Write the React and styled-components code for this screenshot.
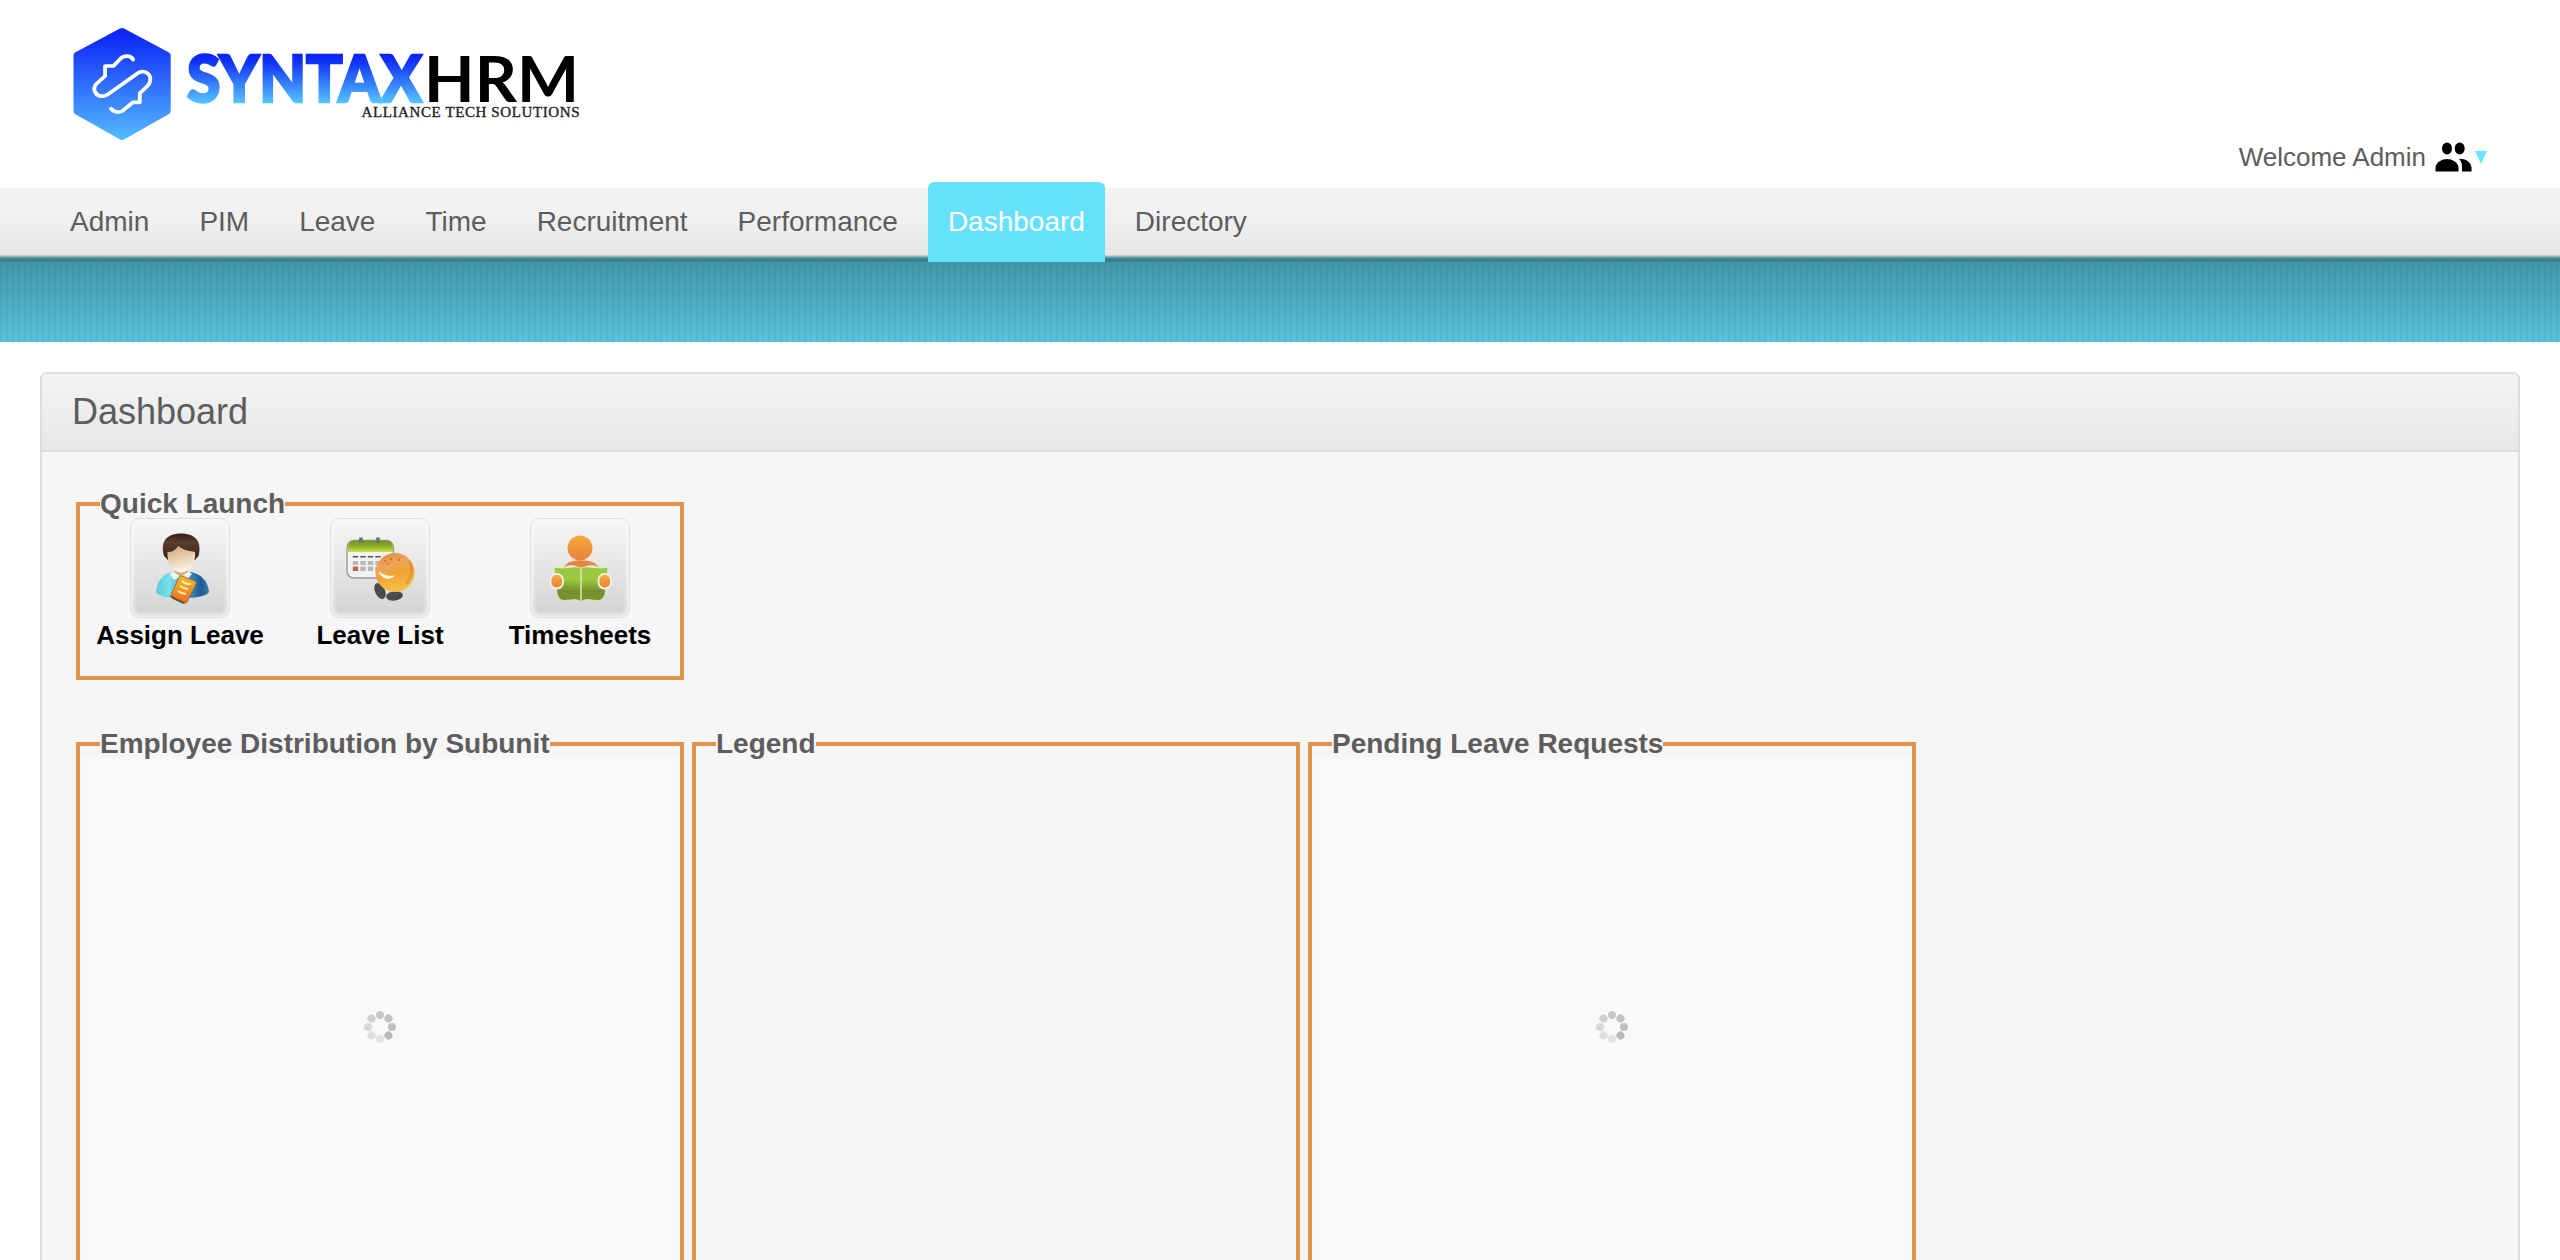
import React from 'react';
import styled, { createGlobalStyle } from 'styled-components';

const GlobalStyle = createGlobalStyle`
  * { box-sizing: border-box; }
  html, body { margin: 0; padding: 0; background: #fff; }
  body { font-family: "Liberation Sans", Arial, sans-serif; color: #5d5d5d; overflow: hidden; }
`;

const Page = styled.div`
  display: flex;
  flex-direction: column;
  width: 100%;
  height: 1260px;
  overflow: hidden;
`;

const Header = styled.header`
  display: flex;
  justify-content: space-between;
  align-items: flex-end;
  height: 188px;
  flex: none;
  padding: 0 72px 0 70px;
`;

const Logo = styled.svg`
  display: block;
  width: 520px;
  height: 120px;
  align-self: flex-start;
  margin-top: 25px;
`;

const Welcome = styled.div`
  display: flex;
  align-items: center;
  height: 30px;
  margin-bottom: 16px;
  font-size: 26px;
  line-height: 30px;
`;

const UserIcon = styled.svg`
  display: block;
  width: 37px;
  height: 30px;
  margin-left: 9px;
`;

const Caret = styled.span`
  width: 0;
  height: 0;
  margin: 0 1px 0 3px;
  border: 6px solid transparent;
  border-top: 13px solid #6ae6fc;
  border-bottom: 0;
`;

const Nav = styled.nav`
  display: flex;
  flex: none;
  height: 74px;
  padding-left: 50px;
  gap: 10px;
  background: linear-gradient(#f3f3f3 0, #f1f1f1 28px, #e6e6e6 67px, #a9bfc4 68px, #4b8f9e 70px, #3b7f8f 71px, #3b7f8f 74px);
`;

const NavItem = styled.a`
  height: ${(p) => (p.$active ? 80 : 74)}px;
  margin-top: ${(p) => (p.$active ? -6 : 0)}px;
  padding: ${(p) => (p.$active ? 24 : 18)}px 20px 0;
  border-radius: 6px 6px 0 0;
  background: ${(p) => (p.$active ? '#66e1fa' : 'transparent')};
  color: ${(p) => (p.$active ? '#fff' : '#5d5d5d')};
  font-size: 28px;
  line-height: 32px;
  white-space: nowrap;
`;

const Band = styled.div`
  flex: none;
  height: 80px;
  background:
    repeating-linear-gradient(90deg, rgba(0, 50, 70, 0.07) 0 2px, rgba(0, 50, 70, 0.02) 2px 3px, transparent 3px 5px, rgba(0, 50, 70, 0.02) 5px 6px),
    linear-gradient(#4397a9, #5ac5dc);
`;

const Panel = styled.section`
  flex: 1;
  min-height: 0;
  margin: 30px 40px 0;
  border: 2px solid #dedede;
  border-bottom: 0;
  border-radius: 7px 7px 0 0;
  background: #f6f6f6;
  overflow: hidden;
`;

const PanelTitle = styled.h1`
  height: 78px;
  margin: 0;
  padding: 17px 30px 0;
  border-bottom: 2px solid #dedede;
  background: linear-gradient(#f3f3f3, #e8e8e8);
  font-size: 36px;
  font-weight: 400;
  line-height: 42px;
`;

const PanelBody = styled.div`
  display: flex;
  flex-direction: column;
  gap: 50px;
  padding: 38px 34px 0;
`;

const WidgetRow = styled.div`
  display: flex;
  gap: 8px;
`;

const Widget = styled.fieldset`
  width: 608px;
  height: ${(p) => p.$height}px;
  margin: 0;
  padding: 0;
  border: 4px solid #e4934a;
`;

const WidgetTitle = styled.legend`
  height: 28px;
  margin-left: 20px;
  padding: 0;
  font-size: 28px;
  font-weight: 700;
  line-height: 27px;
`;

const LoadingArea = styled.div`
  display: flex;
  align-items: center;
  justify-content: center;
  height: 538px;
  background: #f9f9f9;
`;

const Shortcuts = styled.div`
  display: flex;
`;

const Shortcut = styled.a`
  display: flex;
  flex-direction: column;
  align-items: center;
  width: 200px;
  color: #000;
  font-size: 26px;
  font-weight: 700;
  line-height: 30px;
`;

const ShortcutTile = styled.span`
  display: block;
  width: 100px;
  height: 100px;
  margin-bottom: 2px;
  border: 1px solid #e0e0dd;
  border-radius: 9px;
  background: linear-gradient(#f7f7f7, #d3d3d3);
  box-shadow: inset 0 0 4px 2px #f8f8f2;
`;

const TileArt = styled.svg`
  display: block;
  width: 100px;
  height: 100px;
  margin: -1px;
`;

const SpinnerArt = styled.svg`
  display: block;
  width: 32px;
  height: 32px;
`;

function BrandLogo() {
  return (
    <Logo viewBox="70 25 520 120">
      <defs>
        <linearGradient id="hex" x1="0" y1="0" x2="0" y2="1">
          <stop offset="0" stopColor="#0a22f6" />
          <stop offset="0.1" stopColor="#102df7" />
          <stop offset="1" stopColor="#55bcff" />
        </linearGradient>
        <linearGradient id="word" gradientUnits="userSpaceOnUse" x1="0" y1="54" x2="0" y2="103">
          <stop offset="0" stopColor="#0b20f7" />
          <stop offset="0.18" stopColor="#1235f7" />
          <stop offset="1" stopColor="#55c4ff" />
        </linearGradient>
      </defs>
      <path d="M120 28.6Q122 27.400 124 28.600L169 52.500Q170.700 53.500 170.700 55.500V111Q170.700 113 169 114L124 139.500Q122 140.600 120 139.500L75 114Q73.500 113 73.500 111V55.500Q73.500 53.500 75 52.500Z" fill="url(#hex)" />
      <g transform="translate(50 10) scale(.3508 .3333)">
        <path
          d="M237 149C230 134 208 137 200 147L181 168H157V198L132 222C118 240 132 262 154 258Q160 257 168 251L246 193C258 181 279 182 285 200Q289 217 277 229L256 250V277H236L210 300C200 310 182 307 174 296"
          fill="none" stroke="#fff" strokeWidth="11" strokeLinecap="round" strokeLinejoin="round"
        />
      </g>
      <text x="187" y="101.500" textLength="235" lengthAdjust="spacingAndGlyphs" fontFamily="Lato" fontWeight="900" fontSize="64" fill="url(#word)" stroke="url(#word)" strokeWidth="2.600">SYNTAX</text>
      <text x="424" y="102.400" textLength="155" lengthAdjust="spacingAndGlyphs" fontFamily="Lato" fontWeight="700" fontSize="64" fill="#000">HRM</text>
      <text x="361.500" y="116.800" textLength="218" lengthAdjust="spacing" fontFamily="Liberation Serif" fontWeight="400" fontSize="15" fill="#222" stroke="#222" strokeWidth="0.350">ALLIANCE TECH SOLUTIONS</text>
    </Logo>
  );
}

function PeopleIcon() {
  return (
    <UserIcon viewBox="0 0 37 30">
      <ellipse cx="12" cy="6.500" rx="5" ry="6" />
      <ellipse cx="24.700" cy="6.500" rx="5" ry="6" />
      <path d="M0.500 29.500V25C1.500 20 7 17 12 17S22.500 20 23.500 25V29.500Z" />
      <path d="M24 16.800C31 16.700 35.500 20 36.500 25V29.500H27V25C27 21.500 26 19 24 16.800Z" />
    </UserIcon>
  );
}

function AssignLeaveArt() {
  return (
    <TileArt viewBox="0 0 100 100">
      <defs>
        <linearGradient id="shirt">
          <stop offset="0" stopColor="#58cbe0" />
          <stop offset="0.250" stopColor="#79dfea" />
          <stop offset="0.600" stopColor="#3f94c4" />
          <stop offset="0.850" stopColor="#1e5a94" />
          <stop offset="1" stopColor="#3b7db4" />
        </linearGradient>
        <linearGradient id="face" x1="0" y1="0" x2="0.300" y2="1">
          <stop offset="0" stopColor="#d0a67a" />
          <stop offset="0.450" stopColor="#e3c7a3" />
          <stop offset="1" stopColor="#fbf3e6" />
        </linearGradient>
        <linearGradient id="hair" x1="0" y1="0" x2="0" y2="1">
          <stop offset="0" stopColor="#352018" />
          <stop offset="0.350" stopColor="#5b3c2e" />
          <stop offset="1" stopColor="#3a231a" />
        </linearGradient>
        <linearGradient id="note" x1="0" y1="0" x2="0" y2="1">
          <stop offset="0" stopColor="#f7bd2a" />
          <stop offset="1" stopColor="#ef6c1c" />
        </linearGradient>
      </defs>
      <path d="M26 74C27 62 34 55 43 54H61C71 56 78 63 79 74C77 78 66 80 52 80S29 79 26 74Z" fill="url(#shirt)" />
      <path d="M40 56L44 53H58L62 56L54 65L50 59L44 62Z" fill="#edf4f8" />
      <path d="M44 48H58V54L51 59L44 54Z" fill="#d3ae84" />
      <path d="M34 38C30 24 36 15.500 51 15.500C66 15.500 72 24 68.500 38L65 42H38Z" fill="url(#hair)" />
      <path d="M37.500 34C42 34 46 32 48 28C53 32 60 33 65 34C66 45 60 54.500 51 54.500C42 54.500 37 45 37.500 34Z" fill="url(#face)" />
      <path d="M52 58L65 63Q66.500 64 66 66L57 84Q56 86 53.500 85L42 80Q40 79 41 77L49 59.500Q50 57.500 52 58Z" fill="url(#note)" stroke="#8d7350" strokeWidth="1" />
      <path d="M41.500 78Q42 80 54 85" fill="none" stroke="#615548" strokeWidth="2.200" />
      <path d="M52 63Q56 67 61 66M50 68Q54 71 58 71M48 73Q52 76 56 76" fill="none" stroke="#fff0bf" strokeWidth="1.800" />
    </TileArt>
  );
}

function LeaveListArt() {
  const columns = [25.500, 33, 40.500, 48];
  return (
    <TileArt viewBox="0 0 100 100">
      <defs>
        <linearGradient id="calTop" x1="0" y1="0" x2="0" y2="1">
          <stop offset="0" stopColor="#6d9126" />
          <stop offset="0.500" stopColor="#8fae23" />
          <stop offset="1" stopColor="#d0e04b" />
        </linearGradient>
        <linearGradient id="ball" x1="0" y1="0" x2="0.300" y2="1">
          <stop offset="0" stopColor="#e08b42" />
          <stop offset="0.400" stopColor="#eda45b" />
          <stop offset="0.600" stopColor="#f0a336" />
          <stop offset="1" stopColor="#f6bd45" />
        </linearGradient>
      </defs>
      <rect x="17" y="22.500" width="46.500" height="37.500" rx="7" fill="#f2f2f2" stroke="#969696" strokeWidth="1.300" />
      <path d="M18 34V30Q18 22.500 25 22.500H56Q63 22.500 63 30V34Z" fill="url(#calTop)" />
      <path d="M31 19.500V25M48 19.500V25" stroke="#6d6d6d" strokeWidth="3.600" />
      {columns.map((x) => (
        <g key={x}>
          <rect x={x - 2.700} y="38" width="5.400" height="1.500" fill="#555" />
          <rect x={x - 2.700} y="43" width="5.400" height="4" fill="#b8b8b8" />
          <rect x={x - 2.700} y="48.500" width="5.400" height="4.500" fill={x < 26 ? '#ba6553' : '#b8b8b8'} />
        </g>
      ))}
      <ellipse cx="50" cy="73" rx="5" ry="8.500" transform="rotate(-25 50 73)" fill="#4b4b4b" />
      <ellipse cx="64.500" cy="78" rx="8.500" ry="4.700" transform="rotate(-6 64 78)" fill="#4b4b4b" />
      <circle cx="65" cy="54.500" r="19.500" fill="url(#ball)" />
      <path d="M79 43C83.500 51 81 60 76 66" fill="none" stroke="#de7f31" strokeWidth="3" opacity="0.500" />
      <path d="M49 54Q55 64 64 58Q57 60 49 54Z" fill="#fff" stroke="#fff5da" strokeWidth="1.200" />
      <g fill="#cd6327">
        <circle cx="55" cy="43" r="1" /><circle cx="61" cy="41" r="1" /><circle cx="69" cy="42" r="1" /><circle cx="58" cy="46" r="0.800" />
      </g>
    </TileArt>
  );
}

function TimesheetsArt() {
  return (
    <TileArt viewBox="0 0 100 100">
      <defs>
        <linearGradient id="orange" x1="0" y1="0" x2="0" y2="1">
          <stop offset="0" stopColor="#f3ad3c" />
          <stop offset="1" stopColor="#e8803a" />
        </linearGradient>
        <linearGradient id="book" x1="0" y1="0" x2="0" y2="1">
          <stop offset="0" stopColor="#96c83e" />
          <stop offset="0.350" stopColor="#9cc940" />
          <stop offset="0.700" stopColor="#738f2b" />
          <stop offset="1" stopColor="#7a9a2c" />
        </linearGradient>
      </defs>
      <circle cx="50" cy="30" r="12.500" fill="url(#orange)" />
      <path d="M34 49C37 44 43 42 51 42.500C59 42 65 44 69 49C62 46 56 47 51 51C46 47 41 46 34 49Z" fill="#e88640" />
      <path d="M24 49C33 52 44 47 51 50C58 47 69 52 78 49L75 76C72 85 67 82 61 82C56 81 53 82 51 84C49 82 46 81 41 82C35 82 30 85 27 76Z" fill="url(#book)" stroke="#e8f0dc" strokeWidth="0.700" />
      <path d="M51 50V84" stroke="#d8e9b5" strokeWidth="1.500" />
      <g fill="url(#orange)" stroke="#f0f0e8" strokeWidth="1.800">
        <rect x="20.500" y="56" width="12.500" height="14.500" rx="6" />
        <rect x="68.500" y="56" width="12.500" height="14.500" rx="6" />
      </g>
    </TileArt>
  );
}

const SPINNER_SHADES = ['#c8c8c5', '#c3c3c1', '#bebebe', '#b8b8b6', '#e4e4e0', '#dededa', '#d8d8d5', '#d0d0cd'];

function Spinner() {
  return (
    <SpinnerArt viewBox="-16 -16 32 32">
      {SPINNER_SHADES.map((shade, i) => (
        <circle key={shade} cx="0" cy="-12" r="4" fill={shade} transform={`rotate(${i * 45})`} />
      ))}
    </SpinnerArt>
  );
}

const MENU = ['Admin', 'PIM', 'Leave', 'Time', 'Recruitment', 'Performance', 'Dashboard', 'Directory'];

const SHORTCUTS = [
  { label: 'Assign Leave', Art: AssignLeaveArt },
  { label: 'Leave List', Art: LeaveListArt },
  { label: 'Timesheets', Art: TimesheetsArt },
];

export default function App() {
  return (
    <Page>
      <GlobalStyle />
      <Header>
        <BrandLogo />
        <Welcome>
          Welcome Admin
          <PeopleIcon />
          <Caret />
        </Welcome>
      </Header>
      <Nav>
        {MENU.map((item) => (
          <NavItem key={item} $active={item === 'Dashboard'}>{item}</NavItem>
        ))}
      </Nav>
      <Band />
      <Panel>
        <PanelTitle>Dashboard</PanelTitle>
        <PanelBody>
          <WidgetRow>
            <Widget $height={190}>
              <WidgetTitle>Quick Launch</WidgetTitle>
              <Shortcuts>
                {SHORTCUTS.map(({ label, Art }) => (
                  <Shortcut key={label}>
                    <ShortcutTile><Art /></ShortcutTile>
                    {label}
                  </Shortcut>
                ))}
              </Shortcuts>
            </Widget>
          </WidgetRow>
          <WidgetRow>
            <Widget $height={570}>
              <WidgetTitle>Employee Distribution by Subunit</WidgetTitle>
              <LoadingArea><Spinner /></LoadingArea>
            </Widget>
            <Widget $height={570}>
              <WidgetTitle>Legend</WidgetTitle>
            </Widget>
            <Widget $height={570}>
              <WidgetTitle>Pending Leave Requests</WidgetTitle>
              <LoadingArea><Spinner /></LoadingArea>
            </Widget>
          </WidgetRow>
        </PanelBody>
      </Panel>
    </Page>
  );
}
